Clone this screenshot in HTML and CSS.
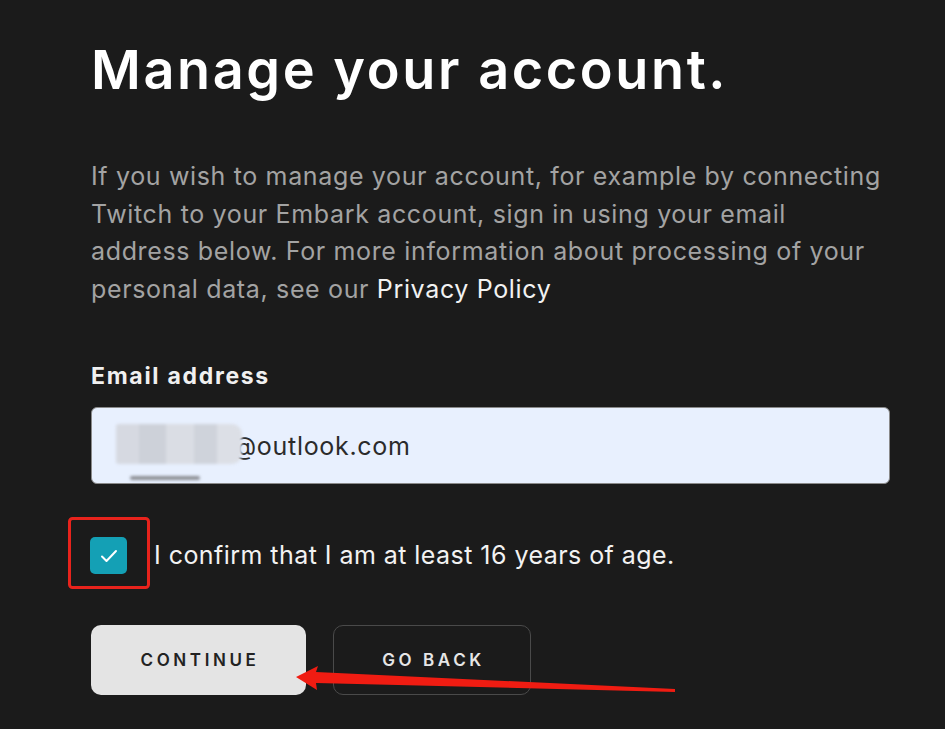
FILE: index.html
```html
<!DOCTYPE html>
<html lang="en">

<head>
    <meta charset="UTF-8" />
    <meta name="viewport" content="width=device-width, initial-scale=1.0" />
    <title>Manage your account</title>
    <link rel="stylesheet" href="styles.css">
</head>

<body>
    <div class="page">
        <h1 class="title">Manage your account.</h1>
        <p class="intro">
            If you wish to manage your account, for example by connecting
            Twitch to your Embark account, sign in using your email
            address below. For more information about processing of your
            personal data, see our <a href="#" class="link">Privacy Policy</a>
        </p>

        <form class="login-form">
            <label class="field-label" for="email">Email address</label>
            <div class="field" id="email">
                <span class="redact"></span><span class="smear"></span><span class="email-text">@outlook.com</span>
            </div>

            <label class="confirm">
                <span class="checkbox">
                    <svg width="18" height="14" viewBox="0 0 18 14">
                        <path d="M2 7.5 L6.5 12 L16 2" fill="none" stroke="#ffffff" stroke-width="2" stroke-linecap="round" stroke-linejoin="round" />
                    </svg>
                </span>
                <span>I confirm that I am at least 16 years of age.</span>
            </label>

            <div class="actions">
                <button type="button" class="btn btn-primary">CONTINUE</button>
                <button type="button" class="btn btn-outline">GO BACK</button>
            </div>
        </form>
    </div>

    <svg class="annotations" width="945" height="729" viewBox="0 0 945 729">
        <rect x="69.5" y="518.5" width="79" height="69" rx="3" fill="none" stroke="#e8231c" stroke-width="3" />
        <polygon points="296,677 318,666 316,672 675,689 675,692 316,683 317,690" fill="#f01c12" />
    </svg>
</body>

</html>
```

FILE: styles.css
```css
body {
    margin: 0;
    background-color: #1b1b1b;
    font-family: Inter, "Open Sans", sans-serif;
    color: #ffffff;
    height: 729px;
    overflow: hidden;
}

.page {
    width: 799px;
    padding: 37px 0 0 91px;
}

.title {
    margin: 0;
    font-size: 54px;
    line-height: 65px;
    font-weight: 600;
    letter-spacing: 2.6px;
    color: #ffffff;
}

.intro {
    margin: 56px 0 0;
    font-size: 25px;
    line-height: 37.5px;
    letter-spacing: 0.65px;
    color: #a3a3a3;
}

.link {
    color: #f2f2f2;
    text-decoration: none;
}

.login-form {
    display: flex;
    flex-direction: column;
}

.field-label {
    margin-top: 53px;
    font-size: 23px;
    line-height: 30px;
    font-weight: 700;
    letter-spacing: 1.7px;
    color: #f0f0f0;
}

.field {
    margin-top: 16px;
    height: 75px;
    border: 1px solid #8a8a8a;
    border-radius: 6px;
    background-color: #e8f0fe;
    display: flex;
    align-items: center;
    position: relative;
    font-size: 25px;
    letter-spacing: 0.7px;
    color: #2b2b2b;
}

.redact {
    display: inline-block;
    width: 126px;
    height: 40px;
    margin-left: 24px;
    margin-right: -10px;
    margin-top: -4px;
    background: linear-gradient(90deg, #d6d9e1 0 18%, #cdd1d9 18% 40%, #dadde4 40% 62%, #cfd3db 62% 80%, #dcdfe6 80%);
    filter: blur(1.5px);
    border-radius: 3px 10px 10px 3px;
    position: relative;
    z-index: 1;
}

.smear {
    position: absolute;
    left: 38px;
    top: 68px;
    width: 70px;
    height: 4px;
    background-color: #8d8f95;
    filter: blur(1.5px);
    border-radius: 2px;
}

.confirm {
    margin-top: 53px;
    display: flex;
    align-items: center;
    gap: 27px;
    font-size: 25px;
    line-height: 37px;
    letter-spacing: 0.45px;
    color: #f2f2f2;
    margin-left: -1px;
}

.checkbox {
    flex: none;
    width: 37px;
    height: 37px;
    border-radius: 5px;
    background-color: #14a0b5;
    display: flex;
    align-items: center;
    justify-content: center;
}

.actions {
    margin-top: 51px;
    display: flex;
    gap: 27px;
}

.btn {
    height: 70px;
    padding: 0 0 0 3px;
    border-radius: 10px;
    font-family: Inter, "Open Sans", sans-serif;
    font-size: 17px;
    font-weight: 600;
    letter-spacing: 3.6px;
    cursor: pointer;
}

.btn-primary {
    width: 215px;
    border: none;
    background-color: #e4e4e4;
    color: #222222;
}

.btn-outline {
    width: 198px;
    border: 1px solid #4a4a4a;
    background-color: transparent;
    color: #e6e6e6;
}

.annotations {
    position: absolute;
    left: 0;
    top: 0;
    pointer-events: none;
}
```
